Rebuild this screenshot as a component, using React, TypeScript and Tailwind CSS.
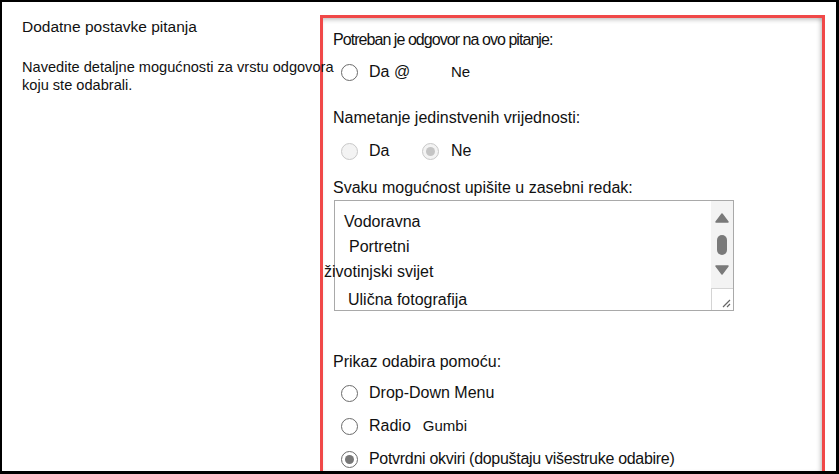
import React from 'react'

type RadioKind = 'off' | 'on' | 'disabled' | 'disabledOn'

function Radio({ kind }: { kind: RadioKind }) {
  const ring =
    kind === 'disabled' || kind === 'disabledOn'
      ? 'border-[#c8c8c8] bg-[#f3f3f3]'
      : 'border-[#6b6b6b] bg-white'
  return (
    <span className={`flex h-[17px] w-[17px] shrink-0 items-center justify-center rounded-full border-[1.5px] ${ring}`}>
      {kind === 'on' && <span className="h-[9px] w-[9px] rounded-full bg-[#777]" />}
      {kind === 'disabledOn' && <span className="h-[9px] w-[9px] rounded-full bg-[#c4c4c4]" />}
    </span>
  )
}

function Label({ children, className = '' }: { children: React.ReactNode; className?: string }) {
  return <div className={`flex h-[20px] items-center text-[16px] ${className}`}>{children}</div>
}

const options = [
  { text: 'Vodoravna', cls: 'pl-[9px]' },
  { text: 'Portretni', cls: 'pl-[14px]' },
  { text: 'životinjski svijet', cls: '-ml-[11px]' },
  { text: 'Ulična fotografija', cls: 'pl-[13px] mt-[3px]' },
]

export default function App() {
  return (
    <div
      className="h-[474px] w-[839px] overflow-hidden border-b-[3px] border-l-2 border-r-[3px] border-t-2 border-black bg-white text-[#111]"
      style={{ fontFamily: '"Liberation Sans", Arial, sans-serif' }}
    >
      <div className="flex h-full">
        {/* left column */}
        <div className="relative z-10 w-[318px] shrink-0 pl-[20px] pt-[16px]">
          <div className="text-[15.5px] leading-[18px]">Dodatne postavke pitanja</div>
          <p className="mt-[22px] w-[330px] text-[14.6px] leading-[18px]">
            Navedite detaljne mogućnosti za vrstu odgovora koju ste odabrali.
          </p>
        </div>

        {/* highlighted panel */}
        <div className="mt-[13px] h-[456px] w-[505px] shrink-0 border-[3px] border-b-0 border-[#f04848] shadow-[inset_0_4px_4px_-2px_rgba(0,0,0,0.22),inset_-4px_0_4px_-2px_rgba(0,0,0,0.18)]">
          <div className="pl-[10px] pt-[12px]">
            <Label className="text-[16.5px] tracking-[-0.95px]">Potreban je odgovor na ovo pitanje:</Label>

            <div className="mt-[12px] flex h-[20px] items-center pl-[8px]">
              <Radio kind="off" />
              <span className="ml-[11px] w-[82px] text-[16px]">Da @</span>
              <span className="text-[15px]">Ne</span>
            </div>

            <Label className="mt-[26px]">Nametanje jedinstvenih vrijednosti:</Label>

            <div className="mt-[13px] flex h-[20px] items-center pl-[8px]">
              <Radio kind="disabled" />
              <span className="ml-[11px] w-[53px] text-[16px]">Da</span>
              <Radio kind="disabledOn" />
              <span className="ml-[12px] text-[16px]">Ne</span>
            </div>

            <Label className="mt-[17px]">Svaku mogućnost upišite u zasebni redak:</Label>

            <div className="mt-[2px] ml-[1px] flex h-[111px] w-[400px] border border-[#a9a9a9]">
              <div className="flex-1 pt-[8px]">
                {options.map((o) => (
                  <div key={o.text} className={`flex h-[25px] items-center whitespace-nowrap text-[16px] ${o.cls}`}>
                    {o.text}
                  </div>
                ))}
              </div>
              <div className="flex w-[22px] flex-col bg-[#f3f3f3]">
                <div className="flex flex-1 flex-col items-center pt-[12px]">
                  <svg width="14" height="10" viewBox="0 0 14 10">
                    <path d="M7 1 L13 9 L1 9 Z" fill="#7a7a7a" stroke="#7a7a7a" strokeWidth="1.5" strokeLinejoin="round" />
                  </svg>
                  <span className="mt-[12px] h-[20px] w-[10px] rounded-full bg-[#7a7a7a]" />
                  <svg className="mt-[10px]" width="14" height="10" viewBox="0 0 14 10">
                    <path d="M1 1 L13 1 L7 9 Z" fill="#7a7a7a" stroke="#7a7a7a" strokeWidth="1.5" strokeLinejoin="round" />
                  </svg>
                </div>
                <div className="relative h-[22px] border-l border-t border-[#d4d4d4] bg-white">
                  <svg className="absolute bottom-[2px] right-[2px]" width="10" height="10" viewBox="0 0 10 10">
                    <path d="M9 2 L2 9 M9 6 L6 9" stroke="#666" strokeWidth="1.2" />
                  </svg>
                </div>
              </div>
            </div>

            <Label className="mt-[41px]">Prikaz odabira pomoću:</Label>

            <div className="mt-[11px] flex h-[20px] items-center pl-[8px]">
              <Radio kind="off" />
              <span className="ml-[11px] text-[16px]">Drop-Down Menu</span>
            </div>

            <div className="mt-[13px] flex h-[20px] items-center pl-[8px]">
              <Radio kind="off" />
              <span className="ml-[11px] text-[16px]">Radio</span>
              <span className="ml-[12px] text-[15px]">Gumbi</span>
            </div>

            <div className="mt-[13px] flex h-[20px] items-center pl-[8px]">
              <Radio kind="on" />
              <span className="ml-[11px] text-[16px] tracking-[-0.3px]">Potvrdni okviri (dopuštaju višestruke odabire)</span>
            </div>
          </div>
        </div>
      </div>
    </div>
  )
}
